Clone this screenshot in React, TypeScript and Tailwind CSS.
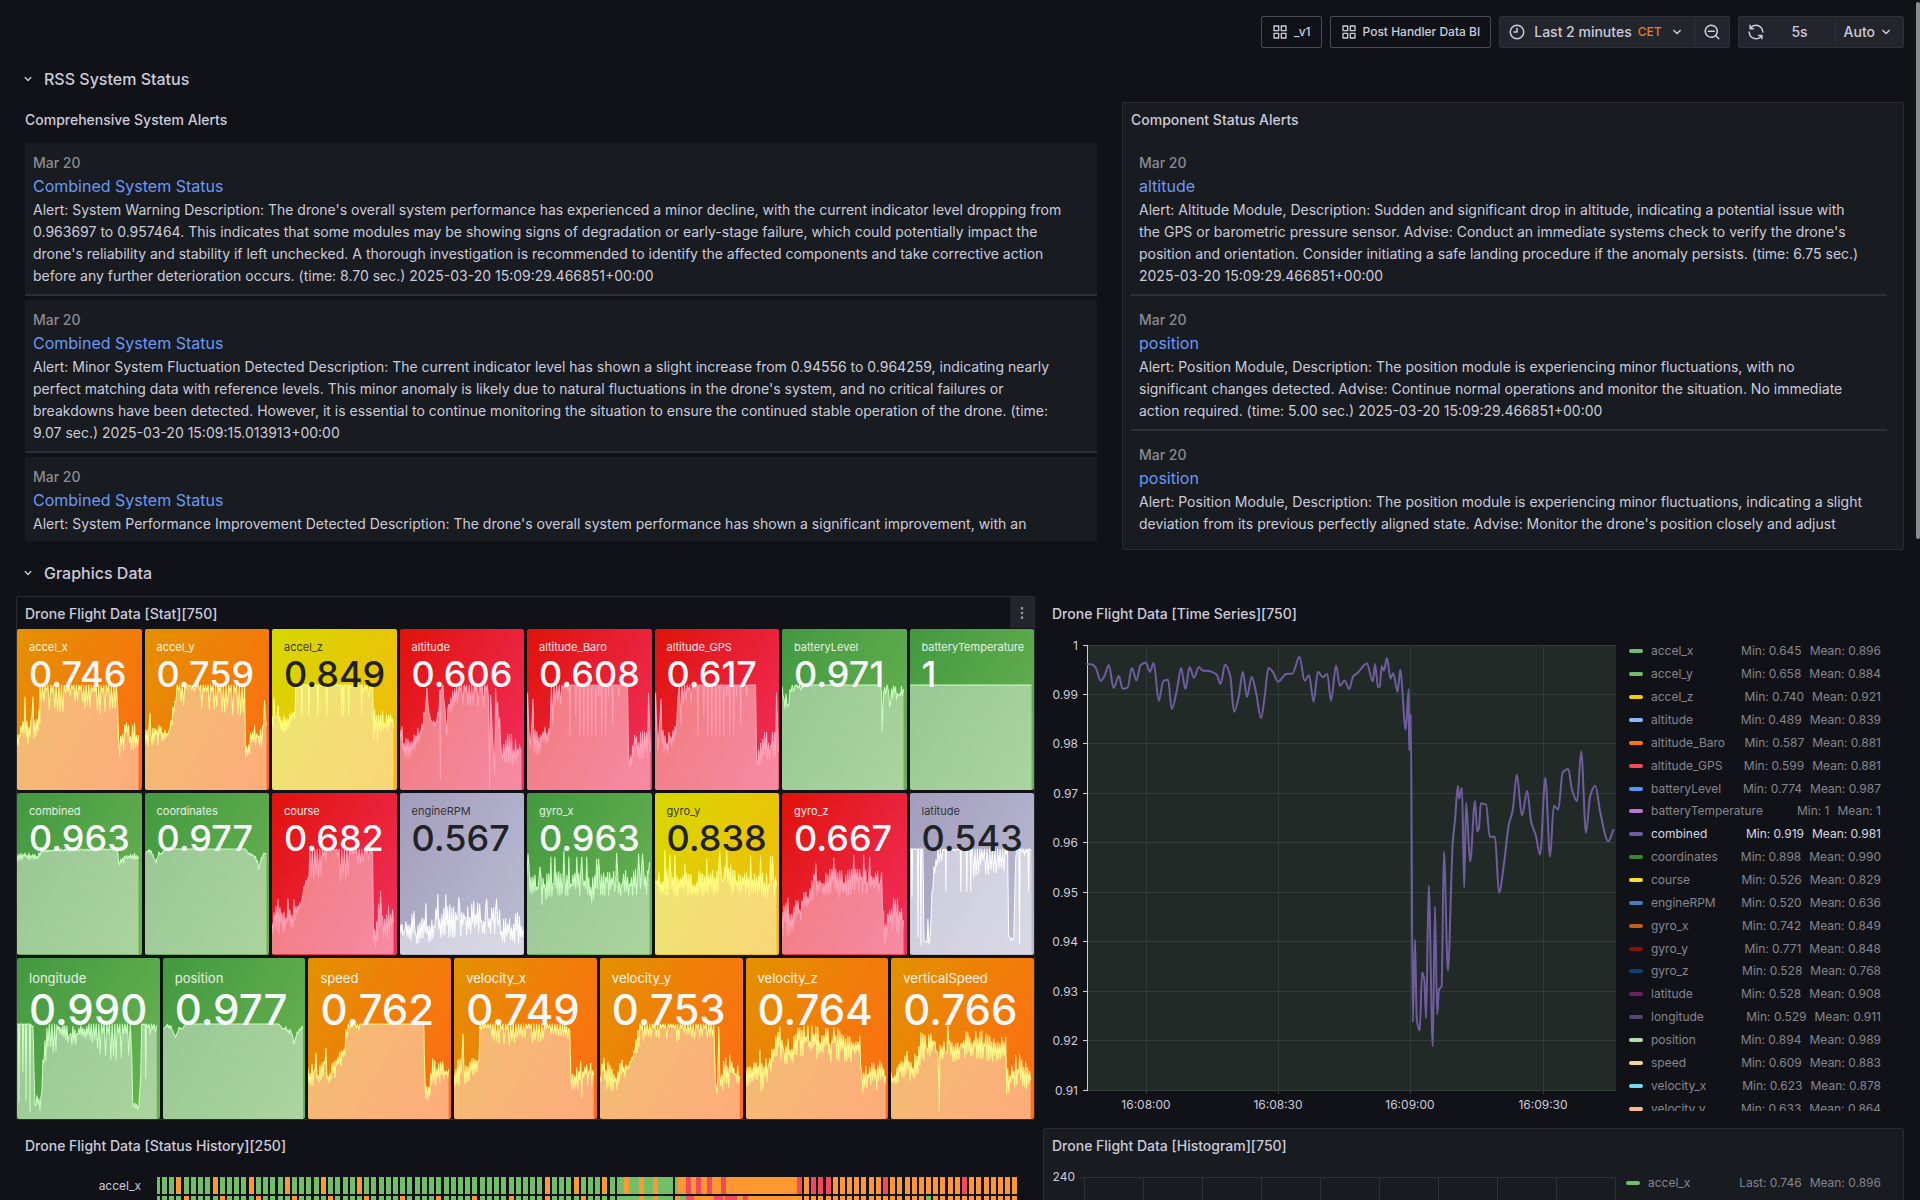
import React from "react";

const ICONS = {
  apps: "M10,13H3a1,1,0,0,0-1,1v7a1,1,0,0,0,1,1h7a1,1,0,0,0,1-1V14A1,1,0,0,0,10,13ZM9,20H4V15H9ZM21,2H14a1,1,0,0,0-1,1v7a1,1,0,0,0,1,1h7a1,1,0,0,0,1-1V3A1,1,0,0,0,21,2ZM20,9H15V4h5Zm1,4H14a1,1,0,0,0-1,1v7a1,1,0,0,0,1,1h7a1,1,0,0,0,1-1V14A1,1,0,0,0,21,13Zm-1,7H15V15h5ZM10,2H3A1,1,0,0,0,2,3v7a1,1,0,0,0,1,1h7a1,1,0,0,0,1-1V3A1,1,0,0,0,10,2ZM9,9H4V4H9Z",
  clock: "M12,2A10,10,0,1,0,22,12,10,10,0,0,0,12,2Zm0,18a8,8,0,1,1,8-8A8,8,0,0,1,12,20ZM12,6a1,1,0,0,0-1,1v4H8a1,1,0,0,0,0,2h4a1,1,0,0,0,1-1V7A1,1,0,0,0,12,6Z",
  zoomOut: "M21.71,20.29,18,16.61A9,9,0,1,0,16.61,18l3.68,3.68a1,1,0,0,0,1.42,0A1,1,0,0,0,21.71,20.29ZM11,18a7,7,0,1,1,7-7A7,7,0,0,1,11,18Zm4-8H7a1,1,0,0,0,0,2h8a1,1,0,0,0,0-2Z",
  sync: "M19.91,15.51H15.38a1,1,0,0,0,0,2h2.4A8,8,0,0,1,4,12a1,1,0,1,0-2,0,10,10,0,0,0,16.88,7.23V21a1,1,0,0,0,2,0V16.5A1,1,0,0,0,19.91,15.51ZM12,2A10,10,0,0,0,5.12,4.77V3a1,1,0,0,0-2,0V7.5a1,1,0,0,0,1,1h4.5a1,1,0,0,0,0-2H6.22A8,8,0,0,1,20,12a1,1,0,0,0,2,0A10,10,0,0,0,12,2Z",
  down: "M17,9.17a1,1,0,0,0-1.41,0L12,12.71,8.46,9.17a1,1,0,0,0-1.41,0,1,1,0,0,0,0,1.42l4.24,4.24a1,1,0,0,0,1.42,0L17,10.59A1,1,0,0,0,17,9.17Z",
  dots: "M12,7a2,2,0,1,0-2-2A2,2,0,0,0,12,7Zm0,10a2,2,0,1,0,2,2A2,2,0,0,0,12,17Zm0-7a2,2,0,1,0,2,2A2,2,0,0,0,12,10Z",
};

function Icon({ name, size = 16 }: { name: keyof typeof ICONS; size?: number }) {
  return (
    <svg width={size} height={size} viewBox="0 0 24 24" fill="currentColor" aria-hidden="true" className="shrink-0">
      <path d={ICONS[name]} />
    </svg>
  );
}

/* ---------- Toolbar ---------- */

function Toolbar() {
  const link = "flex h-8 items-center gap-1.5 rounded-xs border border-[#4a4b50] px-2.5 text-xs font-medium";
  const group = "flex h-8 items-stretch rounded-xs border border-[#2f3136] bg-[#22252b] text-sm font-medium";
  return (
    <header className="flex items-center justify-end gap-2 py-4">
      <a href="#v1" className={link}>
        <Icon name="apps" />
        _v1
      </a>
      <a href="#post-handler" className={link}>
        <Icon name="apps" />
        Post Handler Data BI
      </a>
      <div className={group}>
        <button type="button" className="flex items-center gap-1.5 px-2">
          <Icon name="clock" size={18} />
          <span className="pl-0.5">Last 2 minutes</span>
          <span className="text-xs font-medium text-[#ff8819] opacity-90">CET</span>
          <Icon name="down" size={18} />
        </button>
        <button type="button" aria-label="Zoom out time range" className="flex items-center border-l border-[#2f3136] px-2">
          <Icon name="zoomOut" size={18} />
        </button>
      </div>
      <div className={group}>
        <button type="button" className="flex w-24 items-center px-2">
          <Icon name="sync" size={18} />
          <span className="flex-1 pl-2 text-center">5s</span>
        </button>
        <button type="button" className="flex items-center gap-0.5 border-l border-[#2f3136] px-2">
          Auto
          <Icon name="down" size={18} />
        </button>
      </div>
    </header>
  );
}

function RowHeader({ title }: { title: string }) {
  return (
    <button type="button" className="col-span-full flex h-[30px] items-center gap-2 pl-1 text-left text-base font-medium">
      <Icon name="down" />
      {title}
    </button>
  );
}

/* ---------- Alert lists ---------- */

type Alert = { title: string; body: string };

const SYSTEM_ALERTS: Alert[] = [
  {
    title: "Combined System Status",
    body: `Alert: System Warning Description: The drone's overall system performance has experienced a minor decline, with the current indicator level dropping from
0.963697 to 0.957464. This indicates that some modules may be showing signs of degradation or early-stage failure, which could potentially impact the
drone's reliability and stability if left unchecked. A thorough investigation is recommended to identify the affected components and take corrective action
before any further deterioration occurs. (time: 8.70 sec.) 2025-03-20 15:09:29.466851+00:00`,
  },
  {
    title: "Combined System Status",
    body: `Alert: Minor System Fluctuation Detected Description: The current indicator level has shown a slight increase from 0.94556 to 0.964259, indicating nearly
perfect matching data with reference levels. This minor anomaly is likely due to natural fluctuations in the drone's system, and no critical failures or
breakdowns have been detected. However, it is essential to continue monitoring the situation to ensure the continued stable operation of the drone. (time:
9.07 sec.) 2025-03-20 15:09:15.013913+00:00`,
  },
  {
    title: "Combined System Status",
    body: "Alert: System Performance Improvement Detected Description: The drone's overall system performance has shown a significant improvement, with an",
  },
];

const COMPONENT_ALERTS: Alert[] = [
  {
    title: "altitude",
    body: `Alert: Altitude Module, Description: Sudden and significant drop in altitude, indicating a potential issue with
the GPS or barometric pressure sensor. Advise: Conduct an immediate systems check to verify the drone's
position and orientation. Consider initiating a safe landing procedure if the anomaly persists. (time: 6.75 sec.)
2025-03-20 15:09:29.466851+00:00`,
  },
  {
    title: "position",
    body: `Alert: Position Module, Description: The position module is experiencing minor fluctuations, with no
significant changes detected. Advise: Continue normal operations and monitor the situation. No immediate
action required. (time: 5.00 sec.) 2025-03-20 15:09:29.466851+00:00`,
  },
  {
    title: "position",
    body: `Alert: Position Module, Description: The position module is experiencing minor fluctuations, indicating a slight
deviation from its previous perfectly aligned state. Advise: Monitor the drone's position closely and adjust`,
  },
];

function AlertList({ alerts }: { alerts: Alert[] }) {
  return (
    <ul className="mx-2 mt-2 mb-2 flex min-h-0 flex-1 flex-col gap-1 overflow-hidden pr-2">
      {alerts.map((a, i) => (
        <li key={i} className="shrink-0 border-b-2 border-[#2c3035] bg-[#181b1f] px-2 pt-2 pb-[7px] last:min-h-40">
          <time dateTime="2025-03-20" className="block text-sm leading-[23px] font-medium text-[#8b8b92]">
            Mar 20
          </time>
          <h3>
            <a href="#alert" className="block text-base leading-[25px] text-[#6a99f7]">
              {a.title}
            </a>
          </h3>
          <p className="text-sm leading-[22px] whitespace-pre-line">{a.body}</p>
        </li>
      ))}
    </ul>
  );
}

function PanelTitle({ children }: { children: React.ReactNode }) {
  return <h2 className="flex h-8 shrink-0 items-center px-2 pt-0.5 text-sm font-medium">{children}</h2>;
}

/* ---------- Stat tiles ---------- */

type Band = [x: number, high: number, low: number];
type Tone = "orange" | "yellow" | "red" | "green" | "grey";
type Stat = { name: string; value: string; tone: Tone; bands: Band[] };

const TONES: Record<Tone, { tile: string; label: string; value: string; line: string }> = {
  orange: { tile: "bg-[linear-gradient(120deg,#e29100,#ff6a14)]", label: "text-white/90", value: "text-[#f7f8fa]", line: "#fffb8c" },
  yellow: { tile: "bg-[linear-gradient(120deg,#d6d800,#f7b60d)]", label: "text-[#202226]/90", value: "text-[#202226]", line: "#fffe80" },
  red: { tile: "bg-[linear-gradient(120deg,#e0120a,#f22f60)]", label: "text-white/90", value: "text-[#f7f8fa]", line: "#ffa3ba" },
  green: { tile: "bg-[linear-gradient(120deg,#43993f,#6bb354)]", label: "text-white/85", value: "text-[#f7f8fa]", line: "#ccffc2" },
  grey: { tile: "bg-[linear-gradient(120deg,#a39dbd,#bbbcd2)]", label: "text-[#202226]/90", value: "text-[#202226]", line: "#ffffff" },
};

/* Spikes up to `to` above a noisy baseline, at each given x. */
const spikes = (xs: number[], to: number, high: number, low: number): Band[] =>
  xs.flatMap((x): Band[] => [
    [x - 1, high, low],
    [x, to, to],
    [x + 1, high, low],
  ]);

/* Narrow dips from the ceiling down to `to`. */
const dips = (xs: number[], to: number): Band[] =>
  xs.flatMap((x): Band[] => [
    [x - 0.6, 0, 0],
    [x, to, to],
    [x + 0.6, 0, 0],
  ]);

const POSITION: Band[] = [
  [0, 5, 5], [3, 0, 3], [7, 2, 5], [11, 13, 14], [14, 3, 5], [17, 4, 5], [20, 0, 0], [101, 0, 0], [104, 4, 5], [107, 3, 7],
  [110, 6, 9], [112, 5, 12], [114, 19, 20], [117, 8, 10], [120, 2, 6], [122, 3, 6],
];

const BARO: Band[] = [
  [0, 45, 60], [0.6, 8, 8], [2, 40, 60], [4, 45, 68], [6, 14, 14], [7, 45, 68], [12, 50, 68], [17, 45, 60], [22, 35, 60], [23, 0, 50],
  [26, 0, 45], [27, 0, 20], [35, 0, 20], [40, 0, 10], ...dips([43], 50), ...dips([49], 30), ...dips([53, 57, 61, 65, 69], 50),
  ...dips([72], 12), ...dips([75, 79], 50), ...dips([82], 12), ...dips([86], 40), ...dips([92], 12), [101, 0, 0], [102, 70, 82],
  [106, 60, 80], [108, 50, 72], [118, 48, 72], [121, 50, 72], [122, 8, 8], [124, 60, 72],
];

const COMPACT: Stat[] = [
  {
    name: "accel_x", value: "0.746", tone: "orange",
    bands: [[0, 50, 60], [5, 38, 58], [7, 38, 55], [8, 12, 12], [9, 38, 58], [14, 35, 55], [16, 12, 12], [17, 40, 55], [20, 28, 48], [23, 25, 45], [23, 0, 14], [31, 0, 25], [34, 0, 30], [50, 0, 30], [51, 0, 8], [56, 0, 14], [62, 0, 20], [72, 0, 27], [82, 0, 29], [101, 0, 29], [102, 55, 71], [106, 50, 66], [109, 38, 60], [114, 45, 72], [118, 36, 60], [122, 40, 60]],
  },
  {
    name: "accel_y", value: "0.759", tone: "orange",
    bands: [[0, 45, 60], [4, 40, 60], [5, 28, 28], [6, 45, 60], [14, 42, 58], [20, 45, 56], [25, 38, 48], [29, 18, 30], [31, 0, 18], [40, 0, 22], [43, 0, 6], [55, 0, 7], [57, 0, 25], [72, 0, 26], [80, 0, 30], [100, 0, 30], [101, 55, 70], [106, 50, 68], [110, 38, 58], [118, 42, 62], [120, 16, 20], [122, 30, 50]],
  },
  {
    name: "accel_z", value: "0.849", tone: "yellow",
    bands: [[0, 30, 40], [2, 8, 40], [4, 30, 40], [6, 8, 36], [8, 28, 42], [12, 28, 46], [20, 28, 40], [23, 20, 32], [24, 0, 12], [28, 0, 3], ...dips([30, 37, 46], 31), [52, 0, 2], ...dips([55, 70, 72, 77], 31), [80, 0, 3], ...dips([90], 31), [93, 0, 20], [101, 0, 10], [102, 20, 50], [106, 35, 54], [109, 25, 45], [114, 30, 45], [121, 30, 40], [122, 36, 48]],
  },
  {
    name: "altitude", value: "0.606", tone: "red",
    bands: [[0, 35, 55], [4, 48, 68], [8, 55, 72], [16, 48, 64], [23, 34, 45], [26, 16, 24], [27, 3, 3], [28, 20, 28], [31, 32, 38], [36, 38, 42], [39, 20, 30], [40, 5, 5], [40.5, 95, 95], [41, 5, 5], [43, 0, 5], [45, 22, 24], [47, 50, 50], [48, 22, 24], [52, 10, 30], [58, 0, 22], [72, 0, 22], [89, 0, 24], [90, 106, 106], [91, 0, 22], [95, 92, 92], [96, 5, 28], [100, 20, 45], [102, 70, 80], [106, 50, 80], [114, 52, 76], [122, 56, 74]],
  },
  { name: "altitude_Baro", value: "0.608", tone: "red", bands: BARO },
  { name: "altitude_GPS", value: "0.617", tone: "red", bands: BARO },
  {
    name: "batteryLevel", value: "0.971", tone: "green",
    bands: [[0, 0, 3], [2, 12, 18], [3, 20, 23], [4, 8, 14], [6, 18, 25], [8, 5, 15], [9, 0, 8], [13, 0, 6], [15, 0, 3], [20, 0, 6], [22, 0, 0], [99, 0, 0], [100, 5, 12], [100.5, 46, 46], [102, 5, 8], [104, 0, 10], [107, 0, 10], [108, 22, 22], [110, 0, 14], [117, 2, 17], [122, 0, 8]],
  },
  { name: "batteryTemperature", value: "1", tone: "green", bands: [[0, 0, 0], [122, 0, 0]] },
  {
    name: "combined", value: "0.963", tone: "green",
    bands: [[0, 6, 12], [8, 4, 10], [16, 5, 11], [23, 3, 9], [25, 1, 3], [50, 0, 2], [101, 0, 2], [102, 12, 16], [106, 9, 15], [110, 4, 9], [122, 5, 10]],
  },
  { name: "coordinates", value: "0.977", tone: "green", bands: POSITION },
  {
    name: "course", value: "0.682", tone: "red",
    bands: [[0, 65, 82], [4, 60, 88], [6, 46, 80], [8, 55, 84], [14, 60, 80], [16, 38, 70], [18, 62, 76], [21, 45, 78], [24, 55, 66], [30, 46, 54], [33, 34, 40], [37, 26, 32], [38, 0, 30], [48, 0, 31], [53, 0, 28], [55, 0, 2], [65, 0, 2], [66, 0, 33], [74, 0, 32], [80, 0, 18], [90, 0, 17], [93, 0, 14], [101, 0, 10], [102, 85, 94], [105, 72, 98], [109, 40, 70], [111, 55, 85], [118, 60, 88], [122, 62, 84]],
  },
  {
    name: "engineRPM", value: "0.567", tone: "grey",
    bands: [[0, 76, 88], [8, 72, 92], [14, 64, 86], [16, 80, 98], [20, 74, 90], [24, 66, 86], [26, 56, 76], [28, 74, 92], [33, 72, 88], ...spikes([38, 46], 45, 58, 86), ...spikes([59], 48, 58, 86), [70, 58, 84], [76, 52, 80], ...spikes([87, 97], 50, 60, 82), [101, 60, 84], [102, 72, 92], [112, 70, 90], [119, 64, 94], [124, 74, 88]],
  },
  {
    name: "gyro_x", value: "0.963", tone: "green",
    bands: [[0, 25, 38], [1, 5, 5], [3, 28, 44], [9, 26, 48], ...spikes([13], 18, 28, 54), ...spikes([24, 28], 8, 26, 46), ...spikes([37], 2, 22, 44), ...spikes([42, 50], 8, 26, 46), ...spikes([55, 60], 8, 22, 44), [65, 28, 52], ...spikes([70, 72], 10, 26, 44), ...spikes([90], 4, 24, 46), [100, 22, 44], ...spikes([112, 116], 5, 22, 44), [121, 22, 46], [123, 6, 20]],
  },
  {
    name: "gyro_y", value: "0.838", tone: "yellow",
    bands: [[0, 26, 42], ...spikes([10], 1, 22, 44), ...spikes([15, 20], 6, 22, 44), [24, 24, 48], ...spikes([30], 15, 24, 44), [36, 24, 44], ...spikes([52], 10, 24, 46), ...spikes([65, 72], 2, 20, 42), ...spikes([76], 16, 22, 44), [85, 26, 44], ...spikes([96], 7, 24, 46), ...spikes([106, 116, 118], 7, 26, 48), [122, 28, 44]],
  },
  {
    name: "gyro_z", value: "0.667", tone: "red",
    bands: [[0, 65, 88], [6, 46, 82], [10, 58, 86], [15, 50, 78], [18, 60, 74], [21, 42, 66], [26, 46, 58], [29, 38, 52], [32, 20, 46], [33, 9, 30], [35, 24, 44], ...spikes([52], 9, 22, 44), [60, 24, 48], ...spikes([72, 82], 6, 22, 42), ...spikes([88], 8, 24, 44), [100, 24, 42], [101, 45, 60], [103, 80, 97], [105, 60, 88], [113, 50, 80], [122, 56, 86]],
  },
  {
    name: "latitude", value: "0.543", tone: "grey",
    bands: [[0, 0, 0], ...dips([2], 48), ...dips([8], 88), ...dips([11], 96), [13, 0, 0], [14, 90, 92], [16, 92, 94], [18, 72, 92], [20, 90, 95], [22, 40, 50], [24, 10, 34], [28, 0, 18], [33, 0, 10], ...dips([36], 42), [40, 0, 0], [48, 0, 4], ...dips([51, 57, 61], 42), [64, 0, 30], [70, 0, 28], [72, 0, 6], [76, 0, 28], [88, 0, 24], [98, 0, 20], [99, 84, 86], [101, 88, 92], [104, 90, 92], [106, 10, 20], [107, 0, 0], ...dips([110], 95), [114, 0, 5], [116, 0, 8], ...dips([119], 42), [122, 0, 2]],
  },
];

const WIDE: Stat[] = [
  {
    name: "longitude", value: "0.990", tone: "green",
    bands: [[0, 0, 0], ...dips([2], 78), ...dips([6], 48), ...dips([9], 76), ...dips([13], 88), [16, 0, 6], [18, 80, 85], [21, 68, 82], [23, 83, 86], [25, 60, 66], [27, 2, 38], [31, 0, 30], [39, 0, 30], [41, 2, 8], [49, 2, 16], [53, 4, 20], [60, 4, 19], [66, 2, 10], [72, 0, 18], [78, 0, 20], [82, 0, 36], [98, 0, 38], [112, 0, 38], [115, 0, 38], [116, 80, 84], [119, 78, 84], [122, 82, 86], [124, 50, 55], [125, 0, 2], ...dips([129], 54), [131, 0, 4], [136, 0, 20], [140, 0, 2]],
  },
  { name: "position", value: "0.977", tone: "green", bands: POSITION.map(([x, h, l]): Band => [x * 1.15, h, l]) },
  {
    name: "speed", value: "0.762", tone: "orange",
    bands: [[0, 45, 62], [6, 40, 60], [8, 30, 50], [10, 44, 58], [16, 38, 52], [18, 26, 48], [20, 44, 58], [27, 38, 52], [34, 26, 40], [37, 14, 30], [39, 0, 14], [44, 0, 14], [46, 0, 0], [51, 0, 8], [53, 0, 0], [116, 0, 0], [117, 48, 72], [121, 55, 74], [124, 34, 60], [130, 42, 60], [137, 36, 56], [141, 34, 56]],
  },
  {
    name: "velocity_x", value: "0.749", tone: "orange",
    bands: [[0, 48, 60], [4, 38, 62], [8, 36, 60], [9, 10, 10], [10, 38, 58], [16, 34, 54], [24, 38, 46], [26, 0, 25], [30, 0, 16], [38, 0, 14], [40, 0, 20], [58, 0, 22], [66, 0, 12], [80, 0, 20], [92, 0, 20], [96, 0, 12], [110, 0, 12], [116, 2, 14], [117, 50, 68], [122, 40, 62], [128, 40, 71], [134, 36, 60], [140, 42, 60]],
  },
  {
    name: "velocity_y", value: "0.753", tone: "orange",
    bands: [[0, 48, 60], [4, 32, 60], [8, 40, 64], [16, 42, 64], [22, 34, 56], [27, 42, 48], [33, 32, 38], [37, 8, 28], [40, 0, 22], [46, 0, 14], [76, 0, 15], [78, 0, 22], [84, 0, 10], [96, 0, 16], [114, 0, 14], [116, 60, 70], [118, 40, 66], [119, 3, 3], [120, 40, 66], [127, 32, 60], [134, 36, 62], [140, 44, 60]],
  },
  {
    name: "velocity_z", value: "0.764", tone: "orange",
    bands: [[0, 46, 62], [6, 40, 56], [13, 40, 56], [14, 26, 26], [15, 40, 66], [22, 34, 54], [28, 22, 40], [33, 2, 30], [37, 14, 36], [44, 18, 42], [50, 6, 30], [62, 4, 32], [76, 6, 36], [92, 6, 34], [106, 14, 36], [114, 14, 40], [116, 48, 68], [122, 38, 62], [130, 34, 64], [140, 44, 60]],
  },
  {
    name: "verticalSpeed", value: "0.766", tone: "orange",
    bands: [[0, 48, 64], [5, 40, 58], [13, 38, 54], [15, 22, 50], [20, 40, 56], [26, 28, 50], [31, 6, 34], [36, 14, 34], [42, 8, 26], [47, 26, 34], [48.5, 87, 87], [49, 18, 34], [55, 20, 36], [57, 2, 20], [62, 20, 36], [72, 10, 32], [88, 8, 32], [104, 14, 36], [115, 14, 30], [116, 48, 68], [120, 42, 64], [127, 30, 58], [134, 38, 62], [140, 48, 64]],
  },
];

function sparkPoints(bands: Band[], seed: number): [number, number][] {
  let s = seed * 7919 + 17;
  const rand = () => {
    s = (s * 1103515245 + 12345) % 2147483648;
    return s / 2147483648;
  };
  const out: [number, number][] = [];
  let up = false;
  for (let i = 0; i < bands.length - 1; i++) {
    const [x0, h0, l0] = bands[i];
    const [x1, h1, l1] = bands[i + 1];
    const comb = h0 === 0 && h1 === 0;
    const n = Math.max(1, Math.round((x1 - x0) / (comb ? 1.3 : 1)));
    for (let k = 0; k < n; k++) {
      const t = k / n;
      const hi = h0 + (h1 - h0) * t;
      const lo = l0 + (l1 - l0) * t;
      up = !up;
      let r: number;
      if (comb) r = up ? 0 : rand() < 0.3 ? 0.25 : 0.75 + rand() * 0.25;
      else {
        const spread = rand() ** 2 * 0.7;
        r = up ? spread - 0.1 : 1.1 - spread;
      }
      out.push([x0 + (x1 - x0) * t, Math.max(0, hi + (lo - hi) * r)]);
    }
  }
  const last = bands[bands.length - 1];
  out.push([last[0], (last[1] + last[2]) / 2]);
  return out;
}

function Sparkline({ stat, seed, width, height }: { stat: Stat; seed: number; width: number; height: number }) {
  const pts = sparkPoints(stat.bands, seed);
  const line = pts.map(([x, y], i) => `${i ? "L" : "M"}${x.toFixed(1)} ${(y + 1).toFixed(1)}`).join("");
  const endX = pts[pts.length - 1][0];
  return (
    <svg viewBox={`0 0 ${width} ${height}`} preserveAspectRatio="none" className="block min-h-0 w-full flex-1" aria-hidden="true">
      <path d={`${line}L${endX} ${height}L0 ${height}Z`} fill="#ffffff" fillOpacity="0.44" />
      <path d={line} fill="none" stroke={TONES[stat.tone].line} strokeWidth="1" strokeLinejoin="round" />
    </svg>
  );
}

function StatTile({ stat, seed, wide }: { stat: Stat; seed: number; wide?: boolean }) {
  const tone = TONES[stat.tone];
  return (
    <div className={`flex min-w-0 flex-col overflow-hidden rounded-xs ${tone.tile}`}>
      <div className={`relative z-10 flex flex-col pt-3 pl-3 ${wide ? "h-[65px]" : "h-[55px]"}`}>
        <span className={`${tone.label} ${wide ? "text-[13px] leading-4" : "text-[11px] leading-3"}`}>{stat.name}</span>
        <span className={`font-medium whitespace-nowrap ${tone.value} ${wide ? "text-[42px] leading-[48px]" : "text-[36px] leading-[43px]"}`}>{stat.value}</span>
      </div>
      <Sparkline stat={stat} seed={seed} width={wide ? 143 : 125} height={wide ? 96 : 106} />
    </div>
  );
}

function StatPanel() {
  return (
    <section className="col-span-13 flex h-[524px] flex-col rounded-xs border border-[#2a2c31]">
      <div className="flex shrink-0 items-start justify-between">
        <PanelTitle>Drone Flight Data [Stat][750]</PanelTitle>
        <button type="button" aria-label="Panel menu" className="flex h-[31px] w-6 items-center justify-center bg-[#22252b] text-[#9a9aa6]">
          <Icon name="dots" />
        </button>
      </div>
      <div className="flex min-h-0 flex-1 flex-col gap-[3px]">
        <div className="grid min-h-0 flex-1 grid-cols-8 gap-[3px]">
          {COMPACT.slice(0, 8).map((s, i) => (
            <StatTile key={s.name} stat={s} seed={i + 1} />
          ))}
        </div>
        <div className="grid min-h-0 flex-1 grid-cols-8 gap-[3px]">
          {COMPACT.slice(8).map((s, i) => (
            <StatTile key={s.name} stat={s} seed={i + 9} />
          ))}
        </div>
        <div className="grid min-h-0 flex-1 grid-cols-7 gap-[3px]">
          {WIDE.map((s, i) => (
            <StatTile key={s.name} stat={s} seed={i + 17} wide />
          ))}
        </div>
      </div>
    </section>
  );
}

/* ---------- Time series ---------- */

/* [time, value] samples on a 1429 x 1293 plot raster, origin top left. */
const SERIES: [number, number][] = [
  [0, 55], [17, 58], [25, 70], [37, 104], [47, 90], [59, 58], [72, 125], [86, 90], [96, 127], [110, 123], [121, 67], [134, 103], [144, 60], [159, 51],
  [170, 78], [180, 52], [194, 162], [206, 105], [219, 101], [229, 186], [243, 130], [254, 67], [266, 128], [277, 64], [289, 95], [302, 64], [312, 74],
  [332, 76], [350, 86], [361, 113], [373, 57], [387, 90], [397, 194], [410, 150], [421, 78], [432, 151], [445, 93], [457, 140], [470, 213], [480, 150],
  [490, 67], [502, 78], [516, 107], [538, 84], [555, 83], [574, 34], [588, 104], [600, 88], [612, 165], [624, 78], [637, 93], [649, 84], [659, 162],
  [673, 60], [683, 119], [696, 103], [708, 128], [719, 91], [732, 80], [756, 54], [772, 106], [778, 55], [786, 123], [791, 120], [796, 61], [802, 75],
  [810, 38], [820, 98], [827, 81], [839, 136], [846, 72], [861, 246], [869, 128], [870, 307], [875, 200], [880, 1096], [886, 856], [891, 1090],
  [899, 1120], [905, 952], [911, 970], [916, 1085], [923, 699], [934, 1167], [940, 760], [946, 1074], [951, 1000], [958, 992], [964, 600], [975, 946],
  [988, 575], [994, 510], [1002, 409], [1005, 446], [1013, 415], [1019, 705], [1024, 458], [1035, 630], [1048, 453], [1054, 542], [1059, 530],
  [1064, 460], [1078, 464], [1088, 557], [1102, 558], [1113, 720], [1127, 630], [1139, 525], [1150, 480], [1161, 377], [1175, 496], [1189, 424],
  [1200, 515], [1212, 552], [1224, 609], [1238, 386], [1251, 615], [1261, 467], [1273, 478], [1285, 370], [1300, 360], [1310, 420], [1324, 454],
  [1335, 309], [1348, 546], [1359, 440], [1373, 409], [1387, 490], [1408, 570], [1422, 537],
];

/* Monotone cubic interpolation, so peaks never overshoot. */
function smoothPath(p: [number, number][]) {
  const n = p.length;
  const d = p.slice(1).map((q, i) => (q[1] - p[i][1]) / (q[0] - p[i][0]));
  const m = p.map((_, i) => {
    if (i === 0) return d[0];
    if (i === n - 1) return d[n - 2];
    if (d[i - 1] * d[i] <= 0) return 0;
    return (2 * d[i - 1] * d[i]) / (d[i - 1] + d[i]);
  });
  let out = `M${p[0][0].toFixed(1)} ${p[0][1].toFixed(1)}`;
  for (let i = 0; i < n - 1; i++) {
    const h = (p[i + 1][0] - p[i][0]) / 3;
    out += `C${(p[i][0] + h).toFixed(1)} ${(p[i][1] + m[i] * h).toFixed(1)} ${(p[i + 1][0] - h).toFixed(1)} ${(p[i + 1][1] - m[i + 1] * h).toFixed(1)} ${p[i + 1][0].toFixed(1)} ${p[i + 1][1].toFixed(1)}`;
  }
  return out;
}

const Y_TICKS = ["1", "0.99", "0.98", "0.97", "0.96", "0.95", "0.94", "0.93", "0.92", "0.91"];
const X_TICKS: [number, string][] = [[59, "16:08:00"], [191, "16:08:30"], [323, "16:09:00"], [456, "16:09:30"]];

function TimeSeriesChart() {
  const left = 43;
  const top = 16;
  const w = 529;
  const h = 445;
  const path = smoothPath(SERIES.map(([x, y]): [number, number] => [left + (x / 1429) * w, top + (y / 1293) * h]));
  return (
    <svg viewBox="0 0 576 490" className="block min-w-0 flex-1 self-start" role="img" aria-label="combined over time">
      <rect x={left} y={top} width={w} height={h} fill="#212a26" />
      {Y_TICKS.map((t, i) => {
        const y = Math.floor(top + (i * h) / 9) + 0.5;
        return (
          <g key={t}>
            <line x1={left} x2={left + w} y1={y} y2={y} stroke="#303d37" />
            <line x1={left - 4} x2={left} y1={y} y2={y} stroke="#d0d0da" />
            <text x={left - 9} y={y + 4} textAnchor="end" fontSize="12" fill="#ccccdc">
              {t}
            </text>
          </g>
        );
      })}
      {X_TICKS.map(([x, t]) => (
        <g key={t}>
          <line x1={left + x + 0.5} x2={left + x + 0.5} y1={top} y2={top + h + 4} stroke="#303d37" />
          <text x={left + x} y={top + h + 19} textAnchor="middle" fontSize="12" fill="#ccccdc">
            {t}
          </text>
        </g>
      ))}
      <line x1={left + 0.5} x2={left + 0.5} y1={top} y2={top + h + 1} stroke="#d0d0da" />
      <path d={path} fill="none" stroke="#705da0" strokeWidth="2" strokeLinejoin="round" strokeLinecap="round" />
    </svg>
  );
}

type LegendEntry = [name: string, min: string, mean: string, swatch: string];

const LEGEND: LegendEntry[] = [
  ["accel_x", "0.645", "0.896", "bg-[#73bf69]"],
  ["accel_y", "0.658", "0.884", "bg-[#73bf69]"],
  ["accel_z", "0.740", "0.921", "bg-[#f2cc0c]"],
  ["altitude", "0.489", "0.839", "bg-[#8ab8ff]"],
  ["altitude_Baro", "0.587", "0.881", "bg-[#ff780a]"],
  ["altitude_GPS", "0.599", "0.881", "bg-[#f2495c]"],
  ["batteryLevel", "0.774", "0.987", "bg-[#5794f2]"],
  ["batteryTemperature", "1", "1", "bg-[#b877d9]"],
  ["combined", "0.919", "0.981", "bg-[#705da0]"],
  ["coordinates", "0.898", "0.990", "bg-[#37872d]"],
  ["course", "0.526", "0.829", "bg-[#fade2a]"],
  ["engineRPM", "0.520", "0.636", "bg-[#447ebc]"],
  ["gyro_x", "0.742", "0.849", "bg-[#c15c17]"],
  ["gyro_y", "0.771", "0.848", "bg-[#890f02]"],
  ["gyro_z", "0.528", "0.768", "bg-[#0a437c]"],
  ["latitude", "0.528", "0.908", "bg-[#6d1f62]"],
  ["longitude", "0.529", "0.911", "bg-[#584477]"],
  ["position", "0.894", "0.989", "bg-[#b7dbab]"],
  ["speed", "0.609", "0.883", "bg-[#f4d598]"],
  ["velocity_x", "0.623", "0.878", "bg-[#70dbed]"],
  ["velocity_y", "0.633", "0.864", "bg-[#f9ba8f]"],
];

function LegendRow({ name, stats, swatch, active }: { name: string; stats: string[]; swatch: string; active?: boolean }) {
  return (
    <li className={`flex items-center gap-2 text-xs ${active ? "text-[#d8d8e4]" : "text-[#85868e]"}`}>
      <span className={`h-1 w-3.5 rounded-full ${swatch}`} />
      <button type="button">{name}</button>
      <span className="ml-auto flex gap-2">
        {stats.map((s) => (
          <span key={s}>{s}</span>
        ))}
      </span>
    </li>
  );
}

function TimeSeriesPanel() {
  return (
    <section className="col-span-11 flex h-[524px] flex-col border border-transparent">
      <PanelTitle>Drone Flight Data [Time Series][750]</PanelTitle>
      <div className="flex min-h-0 flex-1">
        <TimeSeriesChart />
        <div className="mb-2 w-[283px] overflow-hidden pt-[11px] pr-[22px] pl-[9px]">
          <ul className="grid h-[480px] auto-rows-fr">
            {LEGEND.map(([name, min, mean, swatch]) => (
              <LegendRow key={name} name={name} stats={[`Min: ${min}`, `Mean: ${mean}`]} swatch={swatch} active={name === "combined"} />
            ))}
          </ul>
        </div>
      </div>
    </section>
  );
}

/* ---------- Status history ---------- */

type Cell = [x: number, width: number, color: string];
const GREEN = "#73bf69";
const ORANGE = "#ff9830";
const RED = "#f2495c";

function historyCells(orange: number[], block: Cell[], red: number[], green: number[]): Cell[] {
  const cells: Cell[] = [[0, 3, GREEN]];
  for (let i = 0; i < 63; i++) cells.push([Math.round(5 + i * 7.22), 5, orange.includes(i) ? ORANGE : GREEN]);
  cells.push(...block);
  for (let i = 0; i < 30; i++) {
    cells.push([Math.round(647 + i * 7.18), 5, red.includes(i) ? RED : green.includes(i) ? GREEN : ORANGE]);
  }
  return cells;
}

const HISTORY: Cell[][] = [
  historyCells(
    [2, 7, 12, 17, 22, 27, 53, 57, 61],
    [[460, 56, GREEN], [467, 5, ORANGE], [482, 5, ORANGE], [496, 5, ORANGE], [518, 3, GREEN], [521, 119, ORANGE], [529, 5, RED], [539, 5, RED], [550, 5, RED], [564, 5, RED], [640, 5, RED]],
    [1, 2, 3, 11, 22],
    [],
  ),
  historyCells(
    [3, 8, 13, 18, 23, 28, 33, 38, 43, 48, 53, 58],
    [[460, 56, GREEN], [482, 5, ORANGE], [496, 5, ORANGE], [518, 5, ORANGE], [523, 6, GREEN], [529, 116, ORANGE], [529, 8, RED], [557, 9, RED], [568, 12, RED], [586, 5, RED]],
    [],
    [17],
  ),
];

function StatusHistoryPanel() {
  return (
    <section className="col-span-13 flex h-[372px] flex-col border border-transparent">
      <PanelTitle>Drone Flight Data [Status History][250]</PanelTitle>
      <div className="flex flex-col gap-0.5 pt-4 pr-[17px]">
        {HISTORY.map((cells, i) => (
          <div key={i} className="flex h-[17px] items-center">
            <span className="w-[140px] shrink-0 pr-4 text-right text-xs">{["accel_x", "accel_y"][i]}</span>
            <svg viewBox="0 0 860 17" preserveAspectRatio="none" className="h-[17px] min-w-0 flex-1" aria-hidden="true">
              {cells.map(([x, w, color], k) => (
                <rect key={k} x={x} y={0} width={w} height={17} fill={color} />
              ))}
            </svg>
          </div>
        ))}
      </div>
    </section>
  );
}

/* ---------- Histogram ---------- */

function HistogramPanel() {
  return (
    <section className="col-span-11 flex h-[372px] flex-col rounded-xs border border-[#2a2c31] bg-[#181b1f]">
      <PanelTitle>Drone Flight Data [Histogram][750]</PanelTitle>
      <div className="flex min-h-0 flex-1">
        <svg viewBox="0 0 572 320" className="block min-w-0 flex-1 self-start" role="img" aria-label="Histogram">
          <text x="31" y="20" textAnchor="end" fontSize="12" fill="#ccccdc">
            240
          </text>
          <line x1="36" x2="571" y1="16.5" y2="16.5" stroke="#2e3136" />
          {Array.from({ length: 10 }, (_, i) => (
            <line key={i} x1={40.5 + i * 59} x2={40.5 + i * 59} y1="16" y2="300" stroke="#2e3136" />
          ))}
        </svg>
        <ul className="w-[287px] pt-3.5 pr-[22px] pl-2.5">
          <LegendRow name="accel_x" stats={["Last: 0.746", "Mean: 0.896"]} swatch="bg-[#73bf69]" />
        </ul>
      </div>
    </section>
  );
}

export default function App() {
  return (
    <div className="relative h-screen overflow-hidden bg-[#111217] px-4 font-[Inter,'Noto_Sans',sans-serif] text-[#ccccdc]">
      <Toolbar />
      <main className="grid grid-cols-[repeat(24,minmax(0,1fr))] gap-2">
        <RowHeader title="RSS System Status" />
        <section className="col-span-14 flex h-[448px] flex-col border border-transparent">
          <PanelTitle>Comprehensive System Alerts</PanelTitle>
          <AlertList alerts={SYSTEM_ALERTS} />
        </section>
        <section className="col-span-10 flex h-[448px] flex-col rounded-xs border border-[#2a2c31] bg-[#181b1f]">
          <PanelTitle>Component Status Alerts</PanelTitle>
          <AlertList alerts={COMPONENT_ALERTS} />
        </section>
        <RowHeader title="Graphics Data" />
        <StatPanel />
        <TimeSeriesPanel />
        <StatusHistoryPanel />
        <HistogramPanel />
      </main>
      <div className="absolute top-0.5 right-0 h-[537px] w-1 rounded-full bg-[#8d8d90]" aria-hidden="true" />
    </div>
  );
}
